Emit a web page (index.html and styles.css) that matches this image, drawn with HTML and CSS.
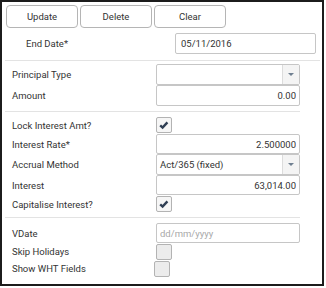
FILE: index.html
```html
<!DOCTYPE html>
<html lang="en">
<head>
  <meta charset="UTF-8">
  <title>Loan Details</title>
  <link rel="stylesheet" href="styles.css">
</head>
<body>
  <div class="panel">
    <div class="toolbar">
      <button class="btn">Update</button>
      <button class="btn">Delete</button>
      <button class="btn">Clear</button>
    </div>

    <div class="end-row">
      <label class="end-label">End Date*</label>
      <input class="text end-input" type="text" value="05/11/2016">
    </div>

    <hr class="sep sep-wide">

    <div class="section s1">
      <label>Principal Type</label>
      <div class="select"><span class="select-value"></span><span class="select-arrow"></span></div>
      <label>Amount</label>
      <input class="text num" type="text" value="0.00">
    </div>

    <hr class="sep">

    <div class="section s2">
      <label>Lock Interest Amt?</label>
      <span class="check checked"><svg viewBox="0 0 16 16" width="16" height="16"><path d="M4.2 8.4 L6.6 10.6 L11.4 5.4" fill="none" stroke="#2f3f54" stroke-width="2.4"/></svg></span>
      <label>Interest Rate*</label>
      <input class="text num" type="text" value="2.500000">
      <label>Accrual Method</label>
      <div class="select"><span class="select-value">Act/365 (fixed)</span><span class="select-arrow"></span></div>
      <label>Interest</label>
      <input class="text num" type="text" value="63,014.00">
      <label>Capitalise Interest?</label>
      <span class="check checked"><svg viewBox="0 0 16 16" width="16" height="16"><path d="M4.2 8.4 L6.6 10.6 L11.4 5.4" fill="none" stroke="#2f3f54" stroke-width="2.4"/></svg></span>
    </div>

    <hr class="sep">

    <div class="section s3">
      <label>VDate</label>
      <input class="text" type="text" placeholder="dd/mm/yyyy">
      <label>Skip Holidays</label>
      <span class="check"></span>
      <label>Show WHT Fields</label>
      <span class="check shift"></span>
    </div>
  </div>
</body>
</html>
```

FILE: styles.css
```css
* {
  box-sizing: border-box;
}

body {
  margin: 0;
  font-family: Roboto, "Liberation Sans", sans-serif;
  font-size: 9.5px;
  color: #333;
  background: #fff;
}

.panel {
  width: 324px;
  height: 286px;
  border: 2px solid #1c1c1c;
}

.toolbar {
  display: flex;
  gap: 2px;
  padding: 3px 0 0 4px;
}

.btn {
  width: 72px;
  height: 23px;
  background: #fff;
  border: 1px solid #b5b5b5;
  border-radius: 4px;
  font-family: inherit;
  font-size: 9.5px;
  color: #333;
  padding: 0;
}

.end-row {
  display: flex;
  align-items: center;
  justify-content: space-between;
  margin-top: 5px;
  padding: 0 6px 0 24px;
}

.text {
  height: 21px;
  border: 1px solid #c6c6c6;
  border-radius: 2px;
  font-family: inherit;
  font-size: 9.5px;
  color: #333;
  padding: 0 3px;
  background: #fff;
  width: 144px;
}

.text::placeholder {
  color: #a8a8a8;
}

.end-input {
  width: 141px;
  padding-left: 5px;
}

.num {
  text-align: right;
}

.sep {
  border: 0;
  border-top: 1px solid #e3e3e3;
  margin: 0 22px 0 3px;
}

.sep-wide {
  margin: 6px 2px 0 3px;
}

.section {
  display: grid;
  grid-template-columns: 144px 144px;
  align-items: center;
  padding-left: 10px;
}

.section .text,
.section .select {
  align-self: stretch;
  height: auto;
}

.s1 {
  grid-template-rows: 21px 21px;
  padding-top: 3px;
  padding-bottom: 5px;
}

.s2 {
  grid-template-rows: 18px 20px 21px 20px 18px;
  padding-top: 4px;
  padding-bottom: 4px;
}

.s3 {
  grid-template-rows: 20px 17px 17px;
  padding-top: 5px;
}

.select {
  display: flex;
  height: 21px;
  border: 1px solid #c6c6c6;
  border-radius: 2px;
  background: #fff;
}

.select-value {
  flex: 1;
  align-self: center;
  padding-left: 3px;
}

.select-arrow {
  width: 17px;
  background: #f4f4f4;
  border-left: 1px solid #dcdcdc;
  position: relative;
}

.select-arrow::after {
  content: "";
  position: absolute;
  left: 5px;
  top: 8px;
  border-left: 3px solid transparent;
  border-right: 3px solid transparent;
  border-top: 3px solid #6f7f90;
}

.check {
  width: 16px;
  height: 16px;
  border: 1px solid #b3b3b3;
  border-radius: 2px;
  background: #ececec;
  display: block;
}

.check svg {
  display: block;
  margin: -1px;
}

.check.checked {
  background: #f6f6f6;
}

.check.shift {
  margin-left: -2px;
}
```
